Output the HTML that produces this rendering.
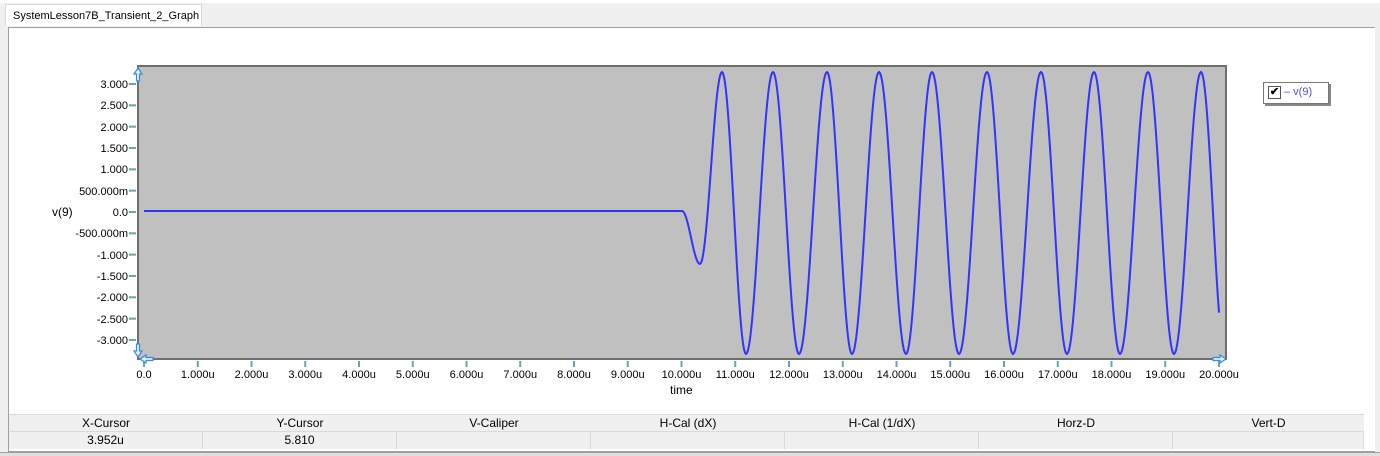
<!DOCTYPE html>
<html><head><style>
body{margin:0;width:1380px;height:455px;background:#f0f0f0;font-family:"Liberation Sans",sans-serif;font-size:11px;color:#000;position:relative;overflow:hidden}
.a{position:absolute}
.tab{left:5px;top:4px;width:197px;height:22px;background:#fff;border:1px solid #d9d9d9;border-bottom:none;font-size:11px;line-height:22px;padding-left:7px;box-sizing:border-box}
.frame{left:8px;top:27px;width:1368px;height:425px;background:#fff;border:1px solid #a0a0a0;box-sizing:border-box}
.yl{right:1252px;text-align:right;font-size:11px}
.xl{font-size:11px;transform:translateX(-50%)}
.th{top:414px;height:16px;line-height:16px;text-align:center;font-size:12px;background:#f0f0f0;border-top:1px solid #dadada}
.td{top:431px;height:17px;line-height:17px;text-align:center;font-size:12px;background:#f0f0f0;border-right:1px solid #dadada;border-top:1px solid #dadada}
</style></head><body>
<div class="a" style="left:0;top:0;width:1380px;height:3px;background:#fff"></div>
<div class="a tab">SystemLesson7B_Transient_2_Graph</div>
<div class="a frame"></div>
<div class="a" style="left:1375px;top:27px;width:5px;height:428px;background:#f0f0f0"></div>
<div class="a" style="left:0;top:452px;width:1380px;height:3px;background:#e0e0e0;border-top:1px solid #a0a0a0"></div>
<svg class="a" style="left:0;top:0" width="1380" height="455">
<rect x="138" y="66" width="1088" height="293" fill="#c0c0c0" stroke="#6e6e6e" stroke-width="2"/>
<g stroke="#5fa8b0" stroke-width="2" id="ticks"></g>
<path id="wave" fill="none" stroke="#3333ff" stroke-width="2"/>
<g fill="#dfefff" stroke="#3c8ae0" stroke-width="1.2">
<path d="M138 68 l-4 6 h2.5 v7 h3 v-7 h2.5 z"/>
<path d="M138 357 l-4 -6 h2.5 v-7 h3 v7 h2.5 z"/>
<path d="M140 359 l6 -4 v2.5 h7 v3 h-7 v2.5 z"/>
<path d="M1226 359 l-6 -4 v2.5 h-7 v3 h7 v2.5 z"/>
</g>
</svg>
<div class="a" style="left:52px;top:205px;font-size:12px">v(9)</div>
<div id="labels"></div>
<div class="a" style="left:670px;top:383px;font-size:12px">time</div>
<div class="a" style="left:1263px;top:82px;width:64px;height:20px;background:#fff;border:1px solid #777;box-shadow:2px 2px 0 #888"></div>
<div class="a" style="left:1268px;top:86px;width:11px;height:11px;border:1px solid #555;background:#fff;font-size:11px;line-height:11px;text-align:center;font-weight:bold">✔</div>
<div class="a" style="left:1284px;top:86px;color:#4b4bff;font-size:11px">– v(9)</div>
<div id="tbl"></div>
<script>
var L=document.getElementById('labels'),h='';
var yl=['3.000','2.500','2.000','1.500','1.000','500.000m','0.0','-500.000m','-1.000','-1.500','-2.000','-2.500','-3.000'];
var t='';
for(var i=0;i<13;i++){var y=84+i*21.33;h+='<div class="a yl" style="top:'+(y-5)+'px">'+yl[i]+'</div>';t+='<line x1="129" y1="'+y+'" x2="136" y2="'+y+'"/>';}
for(var i=0;i<=20;i++){var x=144+i*53.75;h+='<div class="a xl" style="left:'+x+'px;top:369px">'+(i==0?'0.0':i+'.000u')+'</div>';t+='<line x1="'+x+'" y1="361" x2="'+x+'" y2="367"/>';}
L.innerHTML=h;document.getElementById('ticks').innerHTML=t;
var ex=[[682,211],[700,264],[722,72]];
var xs=[746,773,799,827,852,879,906,932,959,987,1013,1041,1067,1094,1120,1148,1174,1201,1225];
for(var i=0;i<xs.length;i++){ex.push([xs[i],(i%2==0)?354:72]);}
var d='M144 211 L682 211';
for(var k=0;k<ex.length-1;k++){var a=ex[k],b=ex[k+1];for(var x=a[0]+1;x<=b[0]&&x<=1219;x++){var f=(x-a[0])/(b[0]-a[0]);var y=a[1]+(b[1]-a[1])*(1-Math.cos(Math.PI*f))/2;d+=' L'+x+' '+y.toFixed(1);}}
document.getElementById('wave').setAttribute('d',d);
var cols=['X-Cursor','Y-Cursor','V-Caliper','H-Cal (dX)','H-Cal (1/dX)','Horz-D','Vert-D'],vals=['3.952u','5.810','','','','',''],s='';
for(var i=0;i<7;i++){var l=9+i*194,w=(i==6?1364-l:194);s+='<div class="a th" style="left:'+l+'px;width:'+w+'px">'+cols[i]+'</div><div class="a td" style="left:'+l+'px;width:'+(w-1)+'px">'+vals[i]+'</div>';}
document.getElementById('tbl').innerHTML=s;
</script>
</body></html>
